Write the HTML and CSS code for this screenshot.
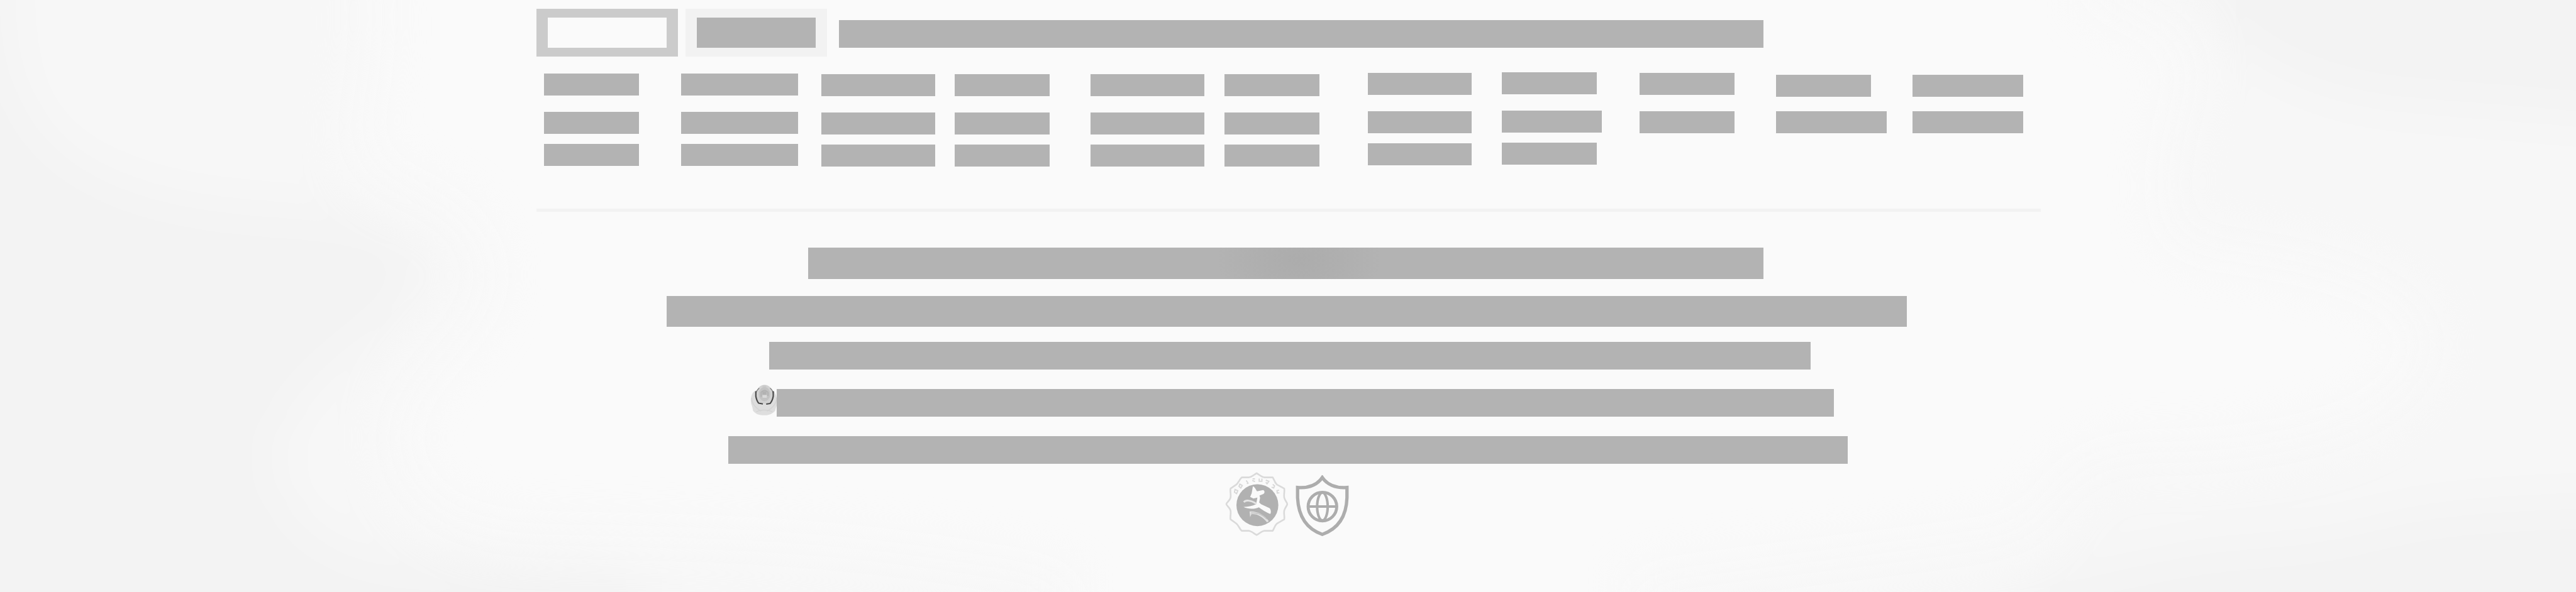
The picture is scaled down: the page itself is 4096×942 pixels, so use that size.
FILE: index.html
```html
<!DOCTYPE html>
<html lang="zh">
<head>
<meta charset="utf-8">
<meta name="viewport" content="width=device-width, initial-scale=1">
<link rel="stylesheet" href="styles.css">
</head>
<body>
<svg class="backdrop" viewBox="0 0 4096 942" preserveAspectRatio="none" aria-hidden="true">
  <defs>
    <filter id="soft" x="-20%" y="-20%" width="140%" height="140%" color-interpolation-filters="sRGB"><feGaussianBlur stdDeviation="40"/></filter>
  </defs>
  <g filter="url(#soft)">
    <path fill="#f7f7f7" d="M-200-200H590V0C600 100 570 180 570 240C600 310 720 290 770 400C810 500 680 560 635 660C610 760 690 850 850 850C1050 858 1300 845 1700 925V1150H-200Z"/>
    <path fill="#f3f3f3" d="M-200-200H20C0 50 10 170 120 250C260 340 420 325 560 345C680 380 690 420 640 490C580 560 480 600 445 700C430 800 500 890 680 895C850 905 950 890 1040 942V1150H-200Z"/>
    <path fill="#f7f7f7" d="M3330-200V0C3480 40 3500 90 3470 160C3440 260 3430 380 3480 390C3640 410 3820 430 3860 540C3840 670 3650 725 3380 720C3260 740 3270 820 3210 850C3100 870 2900 890 2600 930V1150H4300V-200Z"/>
    <path fill="#f3f3f3" d="M3510-200V20C3570 100 3680 150 3800 165C3900 175 4020 180 4300 210V-200Z"/>
    <path fill="#f3f3f3" d="M3100 1150C3180 930 3270 910 3420 885C3550 850 3650 870 3780 830C3900 800 4000 800 4300 790V1150Z"/>
  </g>
</svg>
<main class="page">
  <section class="directory">
    <div class="tabs">
      <button class="tab tab-active" type="button"><span class="tab-label"></span></button>
      <button class="tab" type="button"><span class="tab-label"></span></button>
      <span class="block summary"></span>
    </div>
    <div class="links">
      <ul class="column drop-2"><li class="block w-s"></li><li class="block w-s"></li><li class="block w-s"></li></ul>
      <ul class="column drop-2"><li class="block w-xl"></li><li class="block w-xl"></li><li class="block w-xl"></li></ul>
      <ul class="column drop-3"><li class="block w-l"></li><li class="block w-l"></li><li class="block w-l"></li></ul>
      <ul class="column drop-3"><li class="block w-s"></li><li class="block w-s"></li><li class="block w-s"></li></ul>
      <ul class="column drop-3"><li class="block w-l"></li><li class="block w-l"></li><li class="block w-l"></li></ul>
      <ul class="column drop-3"><li class="block w-s"></li><li class="block w-s"></li><li class="block w-s"></li></ul>
      <ul class="column drop-1"><li class="block w-m"></li><li class="block w-m"></li><li class="block w-m"></li></ul>
      <ul class="column"><li class="block w-s"></li><li class="block w-sm"></li><li class="block w-s"></li></ul>
      <ul class="column drop-1"><li class="block w-s"></li><li class="block w-s"></li></ul>
      <ul class="column drop-4"><li class="block w-s"></li><li class="block w-ml"></li></ul>
      <ul class="column drop-4"><li class="block w-ml"></li><li class="block w-ml"></li></ul>
    </div>
  </section>
  <footer class="notes">
    <p class="block note note-1"></p>
    <p class="block note note-2"></p>
    <p class="block note note-3"></p>
    <div class="note-row">
      <svg class="emblem" viewBox="52 33 176 204" aria-hidden="true">
        <path fill="#dedede" d="M88 72C62 82 50 122 58 160C64 176 68 190 70 206C90 232 120 238 150 237C180 237 205 222 218 206C220 190 228 176 232 160C232 120 222 90 206 74Z"/>
        <path fill="none" stroke="#d3d3d3" stroke-width="6" d="M62 120C62 160 84 184 124 210M228 120C226 160 204 184 164 210M92 214C120 198 170 198 200 214"/>
        <ellipse cx="147" cy="97" rx="57" ry="63" fill="#d2d2d2"/>
        <path fill="#cacaca" d="M134 36h24v16h-24Z"/>
        <ellipse cx="147" cy="96" rx="38" ry="47" fill="#c3c3c3"/>
        <path fill="none" stroke="#b0b0b0" stroke-width="7" d="M124 114V84Q147 56 170 84V108"/>
        <path fill="#b2b2b2" d="M132 76h28v24h-28Z"/>
        <path fill="#dadada" d="M134 102h28v18h-28Z"/>
        <path fill="none" stroke="#777" stroke-width="5" d="M112 56Q94 68 90 90M184 56Q202 68 204 90"/>
        <path fill="none" stroke="#494949" stroke-width="9" stroke-linejoin="round" d="M89 76V110Q94 140 108 156L136 161M205 76V110Q200 140 184 158L158 162"/>
      </svg>
      <p class="block note note-4"></p>
    </div>
    <p class="block note note-5"></p>
    <div class="seals">
      <svg class="seal" viewBox="80 42 417 425" aria-hidden="true">
        <path fill="none" stroke="#dadada" stroke-width="11" stroke-linejoin="round" d="M289 50C305 58 320 76 342 78H396C404 90 408 112 424 126L472 152C476 170 468 190 472 212C476 232 492 244 492 255C492 266 476 278 472 298C468 320 476 340 472 356L424 384C408 398 404 420 396 432H342C320 436 305 452 289 460C273 452 258 436 236 432H190C176 420 170 396 154 384L116 356C112 340 120 320 116 298C112 278 90 266 88 255C90 244 112 232 116 212C120 190 112 170 116 152L154 126C170 112 176 90 190 78H236C258 76 273 58 289 50Z"/>
        <g fill="none" stroke="#d8d8d8" stroke-width="8">
          <path d="M146 158l18 8-8 20-14-10ZM178 122l16 10-10 16-12-10ZM220 98l12 18-8 4M262 88h16M260 98l18 8M306 86v18h18V86M350 96l20 8-12 16-8-10M396 124l12 10-6 14-14-6M438 162l-14 4 2 16 14-2"/>
        </g>
        <circle cx="294" cy="262" r="139" fill="#b1b1b1"/>
        <path fill="#fafafa" d="M264 138C276 140 282 156 292 170L332 162C344 166 344 182 334 188L308 198L312 214L306 244L318 256L374 282C384 290 386 312 380 320C364 314 338 302 304 276C278 288 236 290 202 274C232 274 258 268 286 256L294 212L268 218L246 208L256 184Z"/>
        <path fill="none" stroke="#e5e5e5" stroke-width="12" d="M204 242C216 228 246 226 286 252"/>
        <path fill="#e2e2e2" d="M242 304C300 302 342 330 370 368L358 376C326 338 292 318 254 322L246 342Z"/>
        <path fill="none" stroke="#b1b1b1" stroke-width="4" d="M252 314C298 310 330 328 356 356"/>
      </svg>
      <svg class="shield" viewBox="549 62 354 405" aria-hidden="true">
        <g fill="none" stroke="#adadad">
          <path stroke-width="22" d="M726 78C696 122 642 150 562 144V212C568 340 624 420 726 456C828 420 886 340 890 212V144C812 150 756 122 726 78Z"/>
          <circle cx="727" cy="271" r="95" stroke-width="20"/>
          <ellipse cx="727" cy="271" rx="35" ry="92" stroke-width="17"/>
          <path stroke-width="17" d="M630 271H824"/>
        </g>
      </svg>
    </div>
  </footer>
</main>
</body>
</html>
```
FILE: styles.css
```css
* {
  box-sizing: border-box;
}

body {
  margin: 0;
  background: #fafafa;
  font-family: "Noto Sans", "Noto Sans CJK SC", sans-serif;
}

.backdrop {
  position: fixed;
  inset: 0;
  z-index: -1;
  width: 100%;
  height: 100%;
}

.page {
  padding-top: 14px;
}

.block {
  display: block;
  background: #b3b3b3;
}

.directory {
  width: 58.4%;
  margin-left: 20.83%;
  padding-bottom: 67px;
  border-bottom: 5px solid #f2f2f2;
}

.tabs {
  display: flex;
  align-items: stretch;
  height: 76px;
}

.tab {
  flex: 0 1 225px;
  margin: 0 12px 0 0;
  padding: 14px 18px;
  border: 0;
  background: #f2f2f2;
  cursor: pointer;
}

.tab-label {
  display: block;
  height: 48px;
  background: #b3b3b3;
}

.tab-active {
  background: #cbcbcb;
}

.tab-active .tab-label {
  background: #fafafa;
}

.summary {
  flex: 0 1 1470px;
  height: 44px;
  margin: 18px 0 0 7px;
}

.links {
  display: grid;
  grid-template-columns: 218fr 223fr 212fr 216fr 213fr 228fr 213fr 219fr 217fr 217fr 204fr;
  margin-top: 25px;
  padding-left: 12px;
}

.column {
  display: grid;
  grid-template-rows: 61px 51px 35px;
  align-content: start;
  margin: 0;
  padding: 0;
  list-style: none;
}

.column .block {
  max-width: 100%;
  height: 35px;
}

.drop-1 {
  padding-top: 1px;
}

.drop-2 {
  padding-top: 2px;
}

.drop-3 {
  padding-top: 3px;
}

.drop-4 {
  grid-template-rows: 58px 51px 35px;
  padding-top: 4px;
}

.w-s {
  width: 151px;
}

.w-sm {
  width: 159px;
}

.w-m {
  width: 165px;
}

.w-ml {
  width: 176px;
}

.w-l {
  width: 181px;
}

.w-xl {
  width: 186px;
}

.notes {
  padding-top: 57px;
}

.note {
  height: 44px;
  margin: 0;
}

.note-1 {
  width: 37.08%;
  height: 50px;
  margin-left: 31.37%;
  background: radial-gradient(ellipse 130px 90px at 51.4% 18px, #acacac, #afafaf 50%, #b3b3b3);
}

.note-2 {
  width: 48.14%;
  height: 49px;
  margin: 27px 0 0 25.88%;
}

.note-3 {
  width: 40.43%;
  margin: 24px 0 0 29.86%;
}

.note-row {
  display: flex;
  align-items: flex-start;
  margin: 24px 0 0 29.12%;
}

.emblem {
  flex: none;
  width: 42px;
  height: 49px;
}

.note-4 {
  flex: 0 0 57.9%;
  margin-top: 7px;
}

.note-5 {
  width: 43.46%;
  margin: 31px 0 0 28.28%;
}

.seals {
  display: flex;
  align-items: flex-end;
  gap: 12px;
  margin: 13px 0 0 47.55%;
}

.seal {
  width: 100px;
  height: 102px;
}

.shield {
  width: 85px;
  height: 97px;
}
```
